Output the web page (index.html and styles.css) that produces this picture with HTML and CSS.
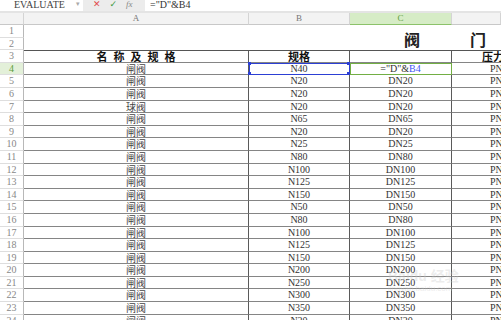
FILE: index.html
```html
<!DOCTYPE html>
<html lang="zh-CN">
<head>
    <meta charset="UTF-8">
    <title>阀门</title>
    <link rel="stylesheet" href="styles.css">
</head>
<body>
    <div class="formula-bar">
        <div class="name-box"><span>EVALUATE</span><span class="arrow">&#9662;</span></div>
        <div class="tools">
            <span class="cancel">&#10005;</span>
            <span class="ok">&#10003;</span>
            <span class="fx">fx</span>
        </div>
        <div class="formula">="D"&amp;B4</div>
    </div>
    <div class="band"></div>

    <div class="sheet" id="sheet">
        <div class="corner"></div>
        <div class="col-head">A</div>
        <div class="col-head">B</div>
        <div class="col-head active">C</div>
        <div class="col-head"></div>

        <div class="rh">1</div>
        <div class="title"><span>阀</span><span>门</span></div>
        <div class="rh">2</div>

        <div class="rh">3</div>
        <div class="c head spaced">名称及规格</div>
        <div class="c head">规格</div>
        <div class="c head"></div>
        <div class="c head left">压力</div>
    </div>

    <div class="watermark">
        <div class="wm-logo">Bai<b>du</b> 经验</div>
        <div class="wm-url">jingyan.baidu.com</div>
    </div>

    <script>
        const rows = [
            ['闸阀', 'N40'], ['闸阀', 'N20'], ['闸阀', 'N20'], ['球阀', 'N20'],
            ['闸阀', 'N65'], ['闸阀', 'N20'], ['闸阀', 'N25'], ['闸阀', 'N80'],
            ['闸阀', 'N100'], ['闸阀', 'N125'], ['闸阀', 'N150'], ['闸阀', 'N50'],
            ['闸阀', 'N80'], ['闸阀', 'N100'], ['闸阀', 'N125'], ['闸阀', 'N150'],
            ['闸阀', 'N200'], ['闸阀', 'N250'], ['闸阀', 'N300'], ['闸阀', 'N350'],
            ['闸阀', 'N20']
        ];
        const sheet = document.getElementById('sheet');
        rows.forEach((r, i) => {
            const n = i + 4;
            let html = `<div class="rh${n === 4 ? ' active' : ''}">${n}</div>`;
            html += `<div class="c cn">${r[0]}</div>`;
            if (n === 4) {
                html += `<div class="c sel">${r[1]}<i class="h tl"></i><i class="h bl"></i><i class="h tr"></i><i class="h br"></i></div>`;
                html += `<div class="c edit">="D"&amp;<span class="ref">B4</span></div>`;
            } else {
                html += `<div class="c">${r[1]}</div>`;
                html += `<div class="c">D${r[1]}</div>`;
            }
            html += `<div class="c left">PN</div>`;
            sheet.insertAdjacentHTML('beforeend', html);
        });
    </script>
</body>
</html>
```

FILE: styles.css
```css
body {
    margin: 0;
    width: 501px;
    height: 320px;
    overflow: hidden;
    background: #fff;
    font-family: 'Liberation Serif', 'Noto Sans CJK SC', serif;
    color: #333;
    position: relative;
}
.formula-bar {
    display: flex;
    height: 11px;
    background: #fff;
    font-size: 10px;
    line-height: 9px;
}
.name-box {
    width: 83px;
    display: flex;
    justify-content: space-between;
    padding-left: 14px;
    padding-right: 3px;
    box-sizing: border-box;
    color: #444;
}
.name-box .arrow {
    color: #aaa;
    font-size: 7px;
}
.tools {
    width: 62px;
    background: #ececec;
    display: flex;
    gap: 9px;
    padding-left: 10px;
    box-sizing: border-box;
    font-family: 'DejaVu Sans', sans-serif;
    font-size: 9px;
}
.cancel { color: #e24b4b; }
.ok { color: #3c9a3c; }
.fx {
    color: #888;
    font-style: italic;
    font-family: 'Liberation Serif', serif;
}
.formula {
    padding-left: 5px;
    color: #333;
}
.band {
    height: 2px;
    background: #e4e4e4;
}
.sheet {
    display: grid;
    grid-template-columns: 24px 225px 101px 102px 49px;
    grid-template-rows: 12px;
    grid-auto-rows: 12.6px;
    font-size: 10px;
}
.corner, .col-head {
    background: #f3f3f3;
    border-bottom: 1px solid #c8c8c8;
    border-right: 1px solid #d4d4d4;
    box-sizing: border-box;
}
.col-head {
    text-align: center;
    color: #777;
    font-size: 9px;
    line-height: 11px;
}
.col-head.active {
    background: #d6ecc6;
    color: #5d9e3c;
    border-bottom-color: #8cc26a;
}
.rh {
    grid-column: 1;
    text-align: center;
    color: #888;
    font-size: 10px;
    line-height: 12px;
    border-bottom: 1px solid #dedede;
    border-right: 1px solid #b8b8b8;
    box-sizing: border-box;
}
.rh.active {
    background: #e3f0d9;
    color: #5d9e3c;
}
.title {
    grid-column: 2 / 6;
    grid-row: span 2;
    display: flex;
    align-items: flex-end;
    padding-left: 380px;
    padding-bottom: 2px;
    gap: 50px;
    font-family: 'Noto Sans CJK SC', sans-serif;
    font-weight: bold;
    font-size: 16px;
    line-height: 18px;
    color: #222;
}
.c {
    position: relative;
    text-align: center;
    line-height: 12px;
    border-bottom: 1px solid #858585;
    border-right: 1px solid #5a5a5a;
    box-sizing: border-box;
    white-space: nowrap;
}
.c.cn {
    font-family: 'Noto Sans CJK SC', sans-serif;
    font-size: 10px;
    line-height: 11px;
    color: #444;
}
.c.left {
    text-align: left;
    padding-left: 38px;
    border-right: none;
}
.c.head {
    border-top: 1px solid #555;
    font-family: 'Noto Sans CJK SC', sans-serif;
    font-weight: bold;
    font-size: 11px;
    line-height: 10px;
    color: #111;
}
.c.head.left {
    padding-left: 30px;
}
.c.spaced {
    letter-spacing: 6px;
    text-indent: 6px;
}
.c.sel {
    outline: 1px solid #2c3fd4;
    outline-offset: -1px;
    z-index: 2;
}
.c.edit {
    outline: 1px solid #72ae44;
    outline-offset: -1px;
    z-index: 1;
}
.ref {
    color: #3d55f2;
}
.h {
    position: absolute;
    width: 3px;
    height: 3px;
    background: #2c3fd4;
}
.tl { left: -1px; top: -1px; }
.bl { left: -1px; bottom: -1px; }
.tr { right: -1px; top: -1px; }
.br { right: -1px; bottom: -1px; }
.watermark {
    position: absolute;
    left: 388px;
    top: 268px;
    color: rgba(200, 200, 200, 0.35);
    font-family: 'Liberation Sans', 'Noto Sans CJK SC', sans-serif;
    pointer-events: none;
}
.wm-logo {
    font-size: 14px;
    font-weight: bold;
    line-height: 16px;
}
.wm-url {
    font-size: 8px;
    line-height: 10px;
}
```
